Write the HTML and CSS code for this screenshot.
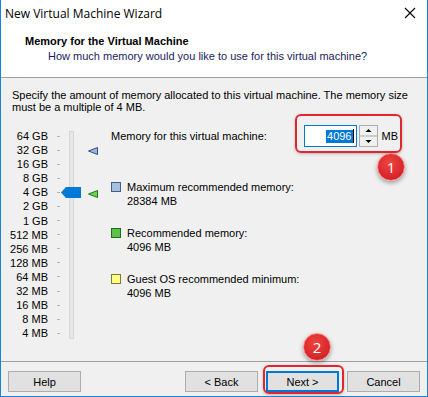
FILE: index.html
```html
<!DOCTYPE html>
<html>
<head>
    <title>New Virtual Machine Wizard</title>
    <meta charset="utf-8">
    <link rel="stylesheet" href="styles.css">
</head>
<body>
    <div class="window">
        <div class="titlebar">
            <span class="titel">New Virtual Machine Wizard</span>
            <svg class="luk" width="12" height="12" viewBox="0 0 12 12">
                <path d="M1 1 L11 11 M11 1 L1 11" stroke="#000" stroke-width="1.1" fill="none"/>
            </svg>
        </div>

        <div class="header">
            <h1>Memory for the Virtual Machine</h1>
            <p class="undertitel">How much memory would you like to use for this virtual machine?</p>
        </div>

        <div class="indhold">
            <p class="intro">Specify the amount of memory allocated to this virtual machine. The memory size must be a multiple of 4 MB.</p>

            <div class="panel">
                <div class="skala">
                    <div class="labels">
                        <span>64 GB</span><span>32 GB</span><span>16 GB</span><span>8 GB</span><span>4 GB</span>
                        <span>2 GB</span><span>1 GB</span><span>512 MB</span><span>256 MB</span><span>128 MB</span>
                        <span>64 MB</span><span>32 MB</span><span>16 MB</span><span>8 MB</span><span>4 MB</span>
                    </div>
                    <div class="ticks">
                        <i></i><i></i><i></i><i></i><i></i><i></i><i></i><i></i><i></i><i></i><i></i><i></i><i></i><i></i><i></i>
                    </div>
                    <div class="spor"></div>
                    <!-- thumb og markører ligger på skalaen -->
                    <svg class="thumb" width="20" height="11" viewBox="0 0 20 11">
                        <path d="M0 5.5 L5 0 H20 V11 H5 Z" fill="#0078d7"/>
                    </svg>
                    <svg class="pil pil-max" width="10" height="8" viewBox="0 0 10 8">
                        <path d="M0.5 4 L9.5 0.5 V7.5 Z" fill="#9ab6de" stroke="#2e4f86" stroke-width="1"/>
                    </svg>
                    <svg class="pil pil-anb" width="10" height="8" viewBox="0 0 10 8">
                        <path d="M0.5 4 L9.5 0.5 V7.5 Z" fill="#6fd15a" stroke="#1d7a14" stroke-width="1"/>
                    </svg>
                </div>

                <div class="hoejre">
                    <div class="felt-raekke">
                        <span>Memory for this virtual machine:</span>
                        <div class="felt">
                            <div class="input"><span class="valgt-tekst">4096</span><span class="cursor"></span></div>
                            <div class="spin">
                                <svg width="19" height="22" viewBox="0 0 19 22">
                                    <rect x="0.5" y="0.5" width="18" height="21" fill="#f0f0f0" stroke="#adadad"/>
                                    <line x1="1" y1="11" x2="18" y2="11" stroke="#adadad"/>
                                    <path d="M6.5 7 L9.5 4 L12.5 7 Z" fill="#000"/>
                                    <path d="M6.5 15 L9.5 18 L12.5 15 Z" fill="#000"/>
                                </svg>
                            </div>
                            <span class="enhed">MB</span>
                        </div>
                    </div>

                    <div class="legende">
                        <div class="punkt">
                            <i class="kasse blaa"></i>
                            <div>Maximum recommended memory:<br>28384 MB</div>
                        </div>
                        <div class="punkt">
                            <i class="kasse groen"></i>
                            <div>Recommended memory:<br>4096 MB</div>
                        </div>
                        <div class="punkt">
                            <i class="kasse gul"></i>
                            <div>Guest OS recommended minimum:<br>4096 MB</div>
                        </div>
                    </div>

                    <div class="markering mark-felt"></div>
                    <div class="nummer nr1">1</div>
                </div>
            </div>
        </div>

        <div class="bund">
            <button>Help</button>
            <div class="knapper">
                <button>&lt; Back</button>
                <button class="standard">Next &gt;</button>
                <button>Cancel</button>
            </div>
            <div class="markering mark-next"></div>
            <div class="nummer nr2">2</div>
        </div>
    </div>
</body>
</html>
```

FILE: styles.css
```css
* {
    box-sizing: border-box;
}

body {
    margin: 0;
    font-family: Tahoma, "Liberation Sans", sans-serif;
    font-size: 11px;
    color: #000;
}

.window {
    width: 428px;
    height: 397px;
    border: 1px solid #1883d7;
    border-top: none;
    background: #f0f0f0;
    display: flex;
    flex-direction: column;
    position: relative;
}

.titlebar {
    height: 29px;
    background: #fff;
    display: flex;
    align-items: center;
    justify-content: space-between;
    padding: 0 11px 0 4px;
    font-family: "Open Sans", "Liberation Sans", sans-serif;
    font-size: 12px;
}

.titlebar .titel {
    margin-top: -3px;
}

.luk {
    margin-top: -3px;
}

.header {
    height: 49px;
    background: #fff;
    border-bottom: 1px solid #a0a0a0;
    padding: 6px 0 0 24px;
}

.header h1 {
    margin: 0;
    font-size: 11px;
    font-weight: bold;
    line-height: 13px;
}

.undertitel {
    margin: 2px 0 0 23px;
    color: #1b1b5e;
    line-height: 13px;
}

.indhold {
    flex: 1;
    padding: 11px 11px 0 11px;
}

.intro {
    margin: 0;
    line-height: 12px;
}

.panel {
    display: flex;
    margin-top: 16px;
}

.skala {
    position: relative;
    display: flex;
    width: 99px;
    height: 215px;
}

.labels {
    width: 36px;
    display: flex;
    flex-direction: column;
    align-items: flex-end;
    white-space: nowrap;
}

.labels span,
.ticks i {
    height: 14.1px;
    line-height: 14px;
}

.ticks {
    width: 21px;
    display: flex;
    flex-direction: column;
    align-items: flex-end;
    padding-right: 9px;
}

.ticks i {
    display: flex;
    align-items: center;
}

.ticks i::after {
    content: "";
    width: 3px;
    height: 1px;
    background: #b4b4b4;
}

.spor {
    width: 5px;
    margin-top: 2px;
    height: 208px;
    background: #e7e7e7;
    border: 1px solid #d6d6d6;
}

.thumb {
    position: absolute;
    left: 49px;
    top: 58px;
}

.pil {
    position: absolute;
    left: 76px;
}

.pil-max {
    top: 18px;
}

.pil-anb {
    top: 61px;
}

.hoejre {
    flex: 1;
    position: relative;
}

.felt-raekke {
    display: flex;
    align-items: center;
    justify-content: space-between;
    height: 22px;
    margin-top: -4px;
    padding-right: 18px;
}

.felt {
    display: flex;
    align-items: center;
}

.input {
    width: 53px;
    height: 22px;
    background: #fff;
    border: 1px solid #0078d7;
    display: flex;
    align-items: center;
    justify-content: flex-end;
    padding-right: 2px;
}

.valgt-tekst {
    background: #0078d7;
    color: #fff;
    line-height: 13px;
    padding: 0 1px;
}

.cursor {
    width: 1px;
    height: 14px;
    background: #000;
}

.spin {
    margin-left: 2px;
    display: flex;
}

.enhed {
    margin-left: 4px;
}

.legende {
    margin-top: 33px;
    display: flex;
    flex-direction: column;
    gap: 18px;
}

.punkt {
    display: flex;
    gap: 6px;
    line-height: 14px;
}

.kasse {
    width: 10px;
    height: 10px;
    margin-top: 2px;
    border: 1px solid;
}

.blaa {
    background: #a7bedc;
    border-color: #415f8c;
}

.groen {
    background: #5cc14a;
    border-color: #1f6e16;
}

.gul {
    background: #ffff88;
    border-color: #7c7c34;
}

.bund {
    height: 35px;
    border-top: 1px solid #a0a0a0;
    display: flex;
    justify-content: space-between;
    padding: 9px 7px 0 7px;
    position: relative;
}

.knapper {
    display: flex;
    gap: 8px;
}

button {
    width: 73px;
    height: 21px;
    background: #e1e1e1;
    border: 1px solid #adadad;
    font-family: inherit;
    font-size: 11px;
    padding: 0;
    margin: 0;
}

button.standard {
    border: 2px solid #0078d7;
}

.markering {
    position: absolute;
    border: 2px solid #e3262d;
    border-radius: 6px;
    box-shadow: 0 1px 3px rgba(0, 0, 0, 0.25);
}

.mark-felt {
    left: 184px;
    top: -15px;
    width: 107px;
    height: 39px;
}

.mark-next {
    left: 262px;
    top: 3px;
    width: 81px;
    height: 29px;
}

.nummer {
    position: absolute;
    width: 28px;
    height: 28px;
    border-radius: 50%;
    background: radial-gradient(circle at 45% 35%, #f0453f, #d4242a 70%);
    color: #fff;
    font-family: "Open Sans", "Liberation Sans", sans-serif;
    font-size: 15px;
    display: flex;
    align-items: center;
    justify-content: center;
    box-shadow: 0 2px 4px rgba(0, 0, 0, 0.35);
    border: 1px solid #ff8a85;
}

.nr1 {
    left: 266px;
    top: 24px;
}

.nr2 {
    left: 302px;
    top: -29px;
}
```
